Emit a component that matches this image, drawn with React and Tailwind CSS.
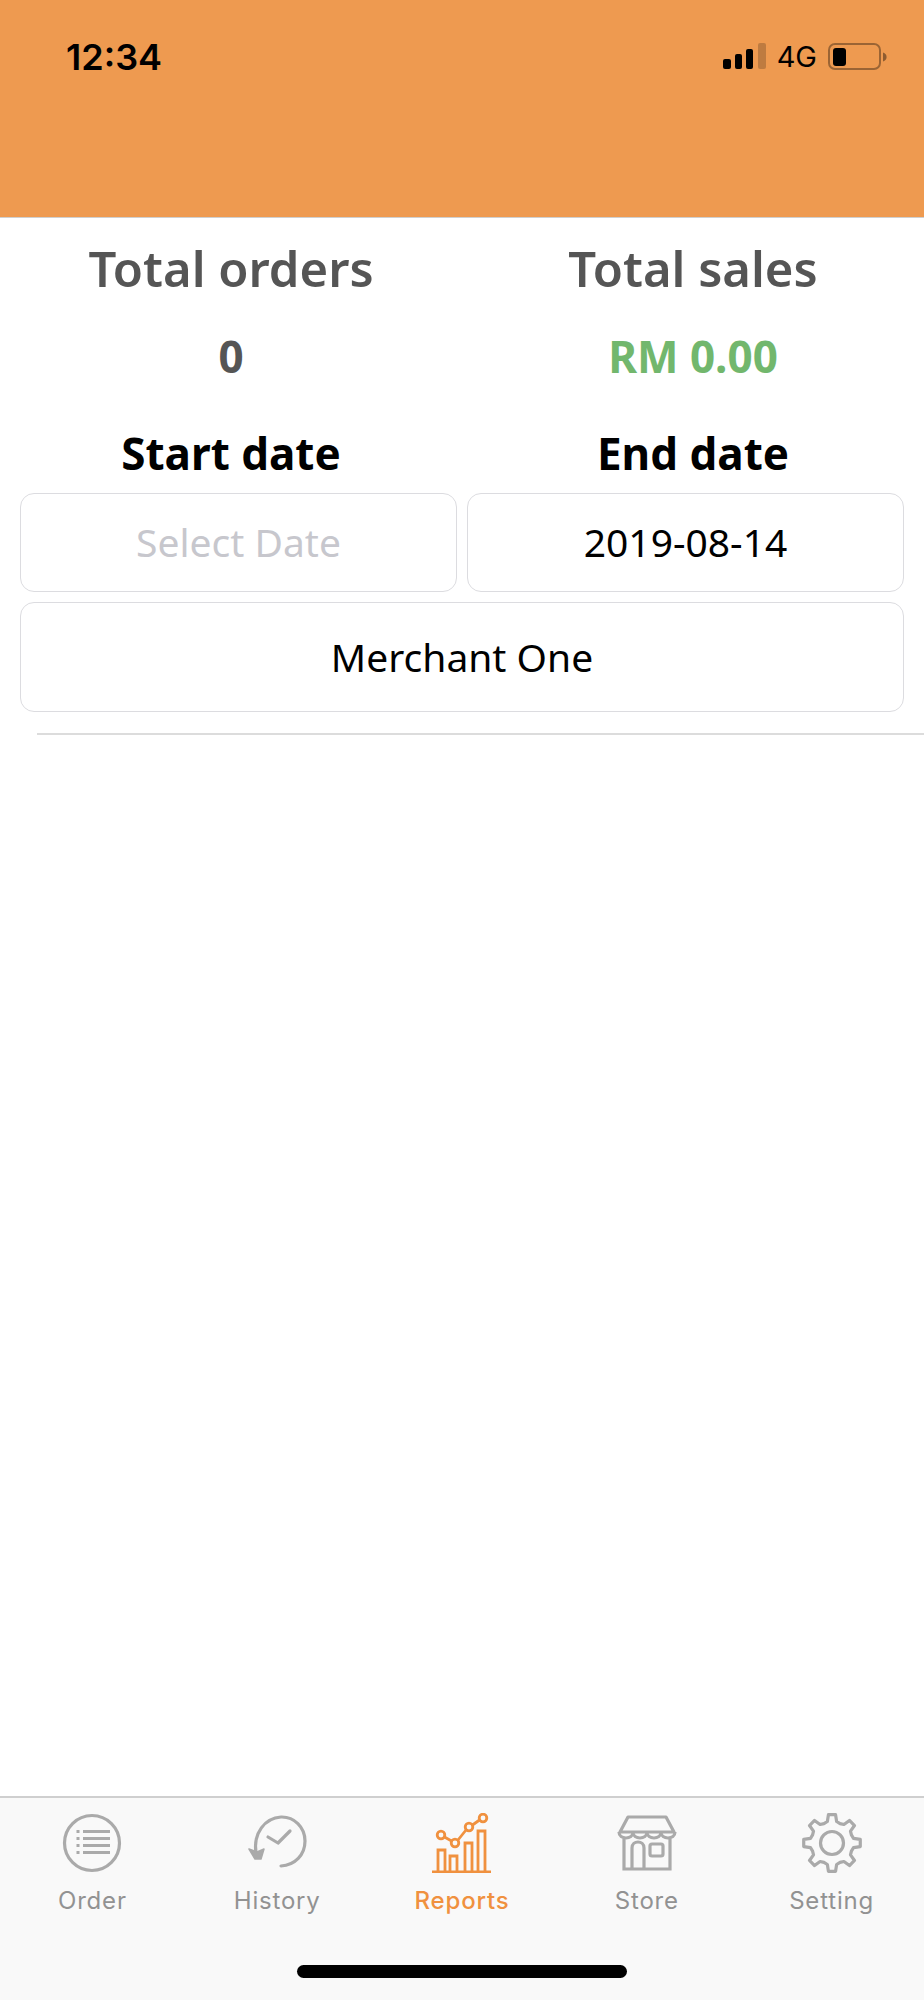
import React from "react";

// ========================== ICONS ==========================
const SignalIcon = () => (
  <svg width="44" height="28" viewBox="0 0 44 28" fill="currentColor" className="text-black">
    <rect x="0" y="16" width="8" height="10" rx="2" />
    <rect x="12" y="11" width="7" height="15" rx="2" />
    <rect x="23" y="6" width="7" height="20" rx="2" />
    <rect x="35" y="0" width="8" height="26" rx="2" opacity="0.2" />
  </svg>
);

const BatteryIcon = () => (
  <svg width="60" height="28" viewBox="0 0 60 28" fill="none">
    <rect x="1" y="1" width="51" height="25" rx="6" stroke="#000" strokeOpacity="0.35" strokeWidth="2" />
    <rect x="5" y="5" width="13" height="18" rx="3" fill="#000" />
    <path d="M55 9.5c2.4.8 3.6 2.400 3.600 4.500s-1.200 3.700-3.600 4.500z" fill="#000" fillOpacity="0.4" />
  </svg>
);

const OrderIcon = () => (
  <svg width="60" height="60" viewBox="0 0 60 60" fill="none" stroke="#aaaaaa" className="blur-[0.6px]">
    <circle cx="30" cy="30" r="27.500" strokeWidth="3.200" />
    <path d="M21 18.500h27M21 25.500h27M21 32.500h27M21 39.500h27" strokeWidth="3.200" />
    <path d="M14.500 18.500h3M14.500 25.500h3M14.500 32.500h3M14.500 39.500h3" strokeWidth="3.200" />
  </svg>
);

const HistoryIcon = () => (
  <svg width="60" height="60" viewBox="0 0 60 60" fill="none" stroke="#aaaaaa" className="blur-[0.6px]">
    <path d="M9 40C6 20 18 5 34 4c13-.5 24 10 24 24 0 14-10 24-24 25" strokeWidth="3.200" strokeLinecap="round" />
    <path d="M21 24l10 6 12-12" strokeWidth="3.200" strokeLinecap="round" strokeLinejoin="round" />
    <path d="M2 36l8 3 7-3-3 10-6 0z" fill="#aaaaaa" strokeWidth="1.500" strokeLinejoin="round" />
  </svg>
);

const ReportsIcon = () => (
  <svg width="60" height="60" viewBox="0 0 60 60" fill="none" stroke="#f0913f" strokeWidth="2.800" className="blur-[0.4px]">
    <path d="M0 59h59" strokeWidth="3" />
    <path d="M6 58V37h7v21M18 58V43h7v15M33 58V30h7v28M46 58V18h7v40" />
    <circle cx="9" cy="22" r="3.800" />
    <circle cx="23" cy="30" r="3.800" />
    <circle cx="37" cy="14" r="3.800" />
    <circle cx="51" cy="5" r="3.800" />
    <path d="M12.500 24l7 4M26 27l8-10M40.500 12l7-5" />
  </svg>
);

const StoreIcon = () => (
  <svg width="60" height="56" viewBox="0 0 60 56" fill="none" stroke="#aaaaaa" strokeWidth="3.200" className="blur-[0.6px]">
    <path d="M11 2h38l8 15H3z" strokeLinejoin="round" />
    <path d="M2 17c0 8 14 8 14 0 0 8 14 8 14 0 0 8 14 8 14 0 0 8 14 8 14 0" />
    <path d="M7 24v30h46V24" />
    <path d="M15 54V33c0-8 12-8 12 0v21" />
    <rect x="33" y="29" width="13" height="12" rx="2" />
  </svg>
);

// Builds the outline of the gear, eight teeth around the centre
const gearPath = () => {
  const teeth = 8;
  const points = [];
  for (let i = 0; i < teeth; i++) {
    const a = (i * 2 * Math.PI) / teeth - Math.PI / 2;
    const step = (2 * Math.PI) / teeth;
    [
      [21, -0.5 * step],
      [22, -0.27 * step],
      [28.500, -0.16 * step],
      [28.500, 0.16 * step],
      [22, 0.27 * step],
    ].forEach(([r, off]) => {
      points.push(`${(30 + r * Math.cos(a + off)).toFixed(2)} ${(30 + r * Math.sin(a + off)).toFixed(2)}`);
    });
  }
  return `M${points.join("L")}Z`;
};

const SettingIcon = () => (
  <svg width="60" height="60" viewBox="0 0 60 60" fill="none" stroke="#aaaaaa" strokeWidth="3.200" className="blur-[0.6px]">
    <path d={gearPath()} strokeLinejoin="round" />
    <circle cx="30" cy="30" r="11.500" />
  </svg>
);

// ========================== CONSTANTS ==========================
const tabs = [
  { label: "Order", icon: OrderIcon },
  { label: "History", icon: HistoryIcon },
  { label: "Reports", icon: ReportsIcon, active: true },
  { label: "Store", icon: StoreIcon },
  { label: "Setting", icon: SettingIcon },
];

// ========================== COMPONENT ==========================
export default function App() {
  return (
    <div className="flex h-[2000px] w-[924px] flex-col bg-white font-['Noto_Sans',sans-serif]">

      {/* ================= STATUS BAR ================= */}
      <header className="h-[218px] shrink-0 border-b border-[#cfcfcf] bg-[#ee9a50] pl-[66px] pr-[36px] pt-[35px]">
        <div className="flex items-center justify-between font-['Inter',sans-serif] text-black">
          <span className="text-[36px] leading-[44px] font-semibold">12:34</span>
          <div className="flex items-center">
            <SignalIcon />
            <span className="ml-[10px] text-[29px] leading-[44px]">4G</span>
            <span className="ml-[11px]"><BatteryIcon /></span>
          </div>
        </div>
      </header>

      {/* ================= TOTALS ================= */}
      <main className="min-h-0 flex-1">
        <div className="grid grid-cols-2 pt-[16px] text-center text-[#555555]">
          <h2 className="text-[49px] leading-[68px] font-semibold">Total orders</h2>
          <h2 className="text-[49px] leading-[68px] font-semibold">Total sales</h2>
          <p className="mt-[24px] text-[44px] leading-[60px] font-bold">0</p>
          <p className="mt-[24px] text-[44px] leading-[60px] font-bold text-[#72b76d]">RM 0.00</p>
        </div>

        {/* ================= DATES ================= */}
        <div className="mt-[37px] grid grid-cols-2 text-center text-black">
          <h3 className="text-[44px] leading-[60px] font-bold">Start date</h3>
          <h3 className="text-[44px] leading-[60px] font-bold">End date</h3>
        </div>
        <div className="mt-[10px] px-[20px]">
          <div className="grid grid-cols-2 gap-[10px]">
            <button className="h-[99px] rounded-[14px] border-[1.5px] border-[#dcdce0] text-[39px] text-[#c7c7cd]">Select Date</button>
            <button className="h-[99px] rounded-[14px] border-[1.5px] border-[#dcdce0] text-[39px] text-black">2019-08-14</button>
          </div>
          <button className="mt-[10px] h-[110px] w-full rounded-[14px] border-[1.5px] border-[#dcdce0] text-[39px] text-black">Merchant One</button>
        </div>
        <div className="ml-[37px] mt-[21px] h-[1.5px] bg-[#dcdcdc]" />
      </main>

      {/* ================= TAB BAR ================= */}
      <nav className="h-[204px] shrink-0 border-t-2 border-[#cfcfcf] bg-[#f9f9f9]">
        <div className="grid grid-cols-5 pt-[15px]">
          {tabs.map(({ label, icon: Icon, active }) => (
            <div key={label} className="flex flex-col items-center">
              <div className="flex h-[60px] items-center justify-center"><Icon /></div>
              <span className={`mt-[12px] font-['Inter',sans-serif] text-[24px] leading-[32px] tracking-[0.8px] ${active ? "font-medium text-[#f0913f]" : "text-[#929292]"}`}>
                {label}
              </span>
            </div>
          ))}
        </div>
        <div className="mx-auto mt-[48px] h-[13px] w-[330px] rounded-full bg-black" />
      </nav>

    </div>
  );
}
